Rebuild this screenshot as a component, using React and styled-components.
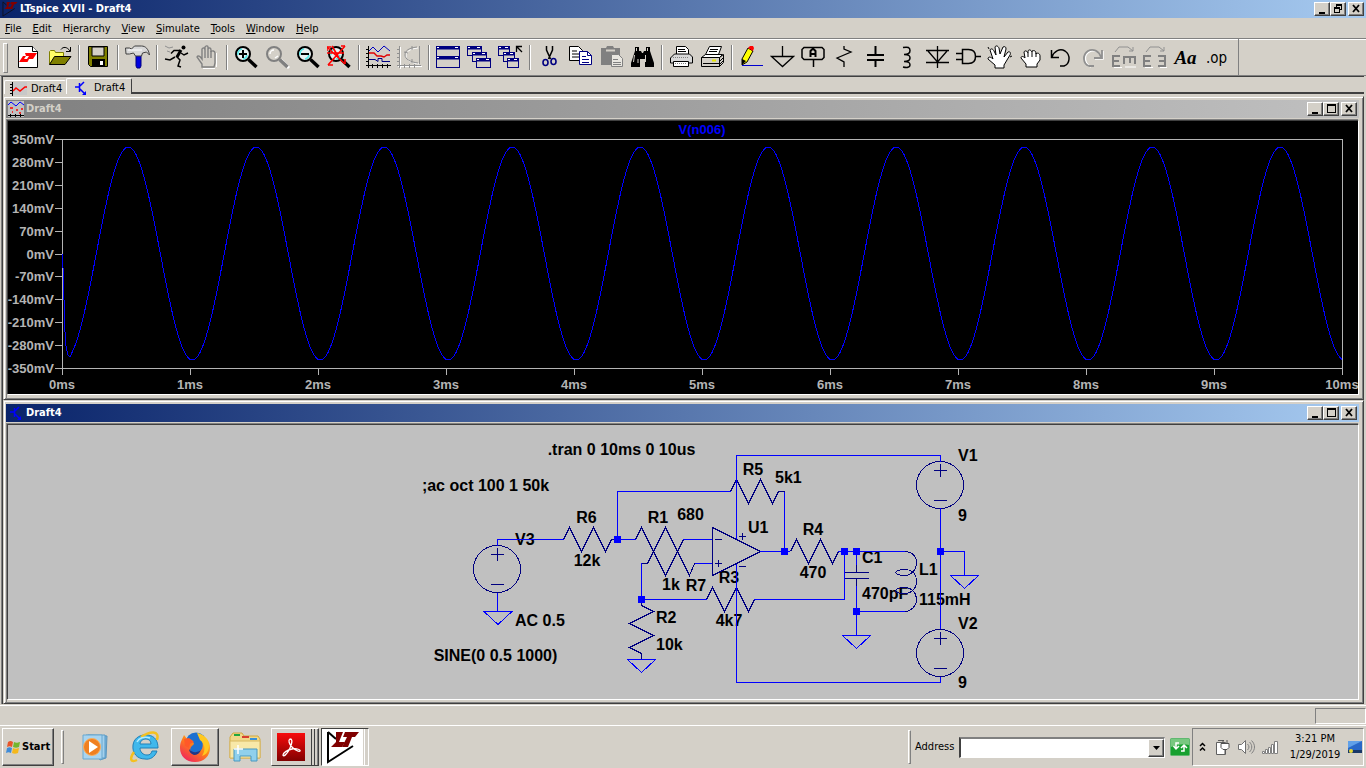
import React from "react";
import styled, { createGlobalStyle, css } from "styled-components";

const GlobalStyle = createGlobalStyle`
  * {
    box-sizing: border-box;
  }

  body {
    margin: 0;
    background: #d4d0c8;
    font-family: "DejaVu Sans Condensed", "DejaVu Sans", sans-serif;
    font-size: 11px;
    line-height: 14px;
    color: #000;
  }

  button, input, select {
    font: inherit;
    color: inherit;
    border-radius: 0;
  }

  svg {
    display: block;
    flex: none;
  }
`;

const raised = css`
  border: 1px solid;
  border-color: #fff #404040 #404040 #fff;
  box-shadow: inset -1px -1px 0 #808080;
`;

/* ---------- toolbar icons, all on a 25 x 25 canvas ---------- */

const Lens = ({ stroke = "#000", glass = "#e8f0f0" }) => (
  <>
    <circle cx="9" cy="9" r="7" fill={glass} stroke={stroke} strokeWidth="2" />
    <path d="M14.5 14.5L22.5 22" stroke={stroke} strokeWidth="3.4" />
    <path d="M4 10a5 5 0 0 1 4-6M13 10a5 5 0 0 1-4 4" stroke="#55e8e8" strokeWidth="1.6" />
  </>
);

const MiniWindow = ({ x, y, w = 14, h = 9 }) => (
  <>
    <rect x={x + 0.5} y={y + 0.5} width={w} height={h} fill="#d4d0c8" stroke="#000080" />
    <path d={`M${x} ${y + 2}h${w + 1}`} stroke="#000080" strokeWidth="3" />
    <path d={`M${x + w - 4} ${y + 1.5}h3M${x + 1} ${y + 1.5}h2`} stroke="#fff" />
  </>
);

const icons = {
  newSchematic: (
    <>
      <path d="M2.5 1.5h14l5 5v16h-19z" fill="#fff" stroke="#000" />
      <path d="M16.5 1.5v5h5" fill="#fff" stroke="#000" />
      <path d="M9 8h12l-4 6h-4l-1.500 3H3l4-6h3zM10 11l-2 3h3l2-3z" fill="#f00" fillRule="evenodd" />
    </>
  ),
  open: (
    <>
      <path d="M2.500 19.500v-13l1-1h4l1 2h8v5" fill="#ffff66" stroke="#808000" />
      <path d="M2.500 19.500l5-8h16.500l-6 8z" fill="#808000" stroke="#000" />
      <path d="M14 4.500c2-3 6-3 9 1.500M23.500 2v4.500h-4.500" stroke="#000" />
    </>
  ),
  save: (
    <>
      <path d="M2.500 1.500h19v20h-17l-2-2z" fill="#808000" stroke="#000" />
      <path d="M6 2h12v9H6z" fill="#d4d0c8" stroke="#000" />
      <path d="M6 14h13v7H6z" fill="#000" />
      <path d="M14 16h3v4h-3z" fill="#fff" />
    </>
  ),
  hammer: (
    <>
      <path d="M11 10h5v11l-1 2h-3l-1-2z" fill="#0000e0" stroke="#000080" />
      <path d="M.5 3h4l2 1 3-3h7c4 0 7 3 8 9l-3-3-4 1-1 3h-6l-2-3-4 1H1z" fill="#d8d8d8" stroke="#404040" />
      <path d="M3 5h14" stroke="#fff" />
    </>
  ),
  run: (
    <>
      <circle cx="19.500" cy="2.500" r="2" fill="#000" />
      <path d="M17 5l-4 7" stroke="#000" strokeWidth="3" />
      <path d="M16 5.500h-6l-3 3M17 8l3 2 4-2M12 11l4 4-2 6 3 1M11 12l-5 3-5-1" stroke="#000" strokeWidth="1.500" />
      <path d="M1 1l4 2 4-1M3 6l3 1" stroke="#909090" />
    </>
  ),
  halt: (
    <>
      <path d="M7 22v-3l-5-7c1-2 3-1 5 2V4c1-2 3-1 3 1V2c1-2 3-1 3 0v2c1-2 3-1 3 1v2c1-2 4-1 4 1v10l-1 4z" fill="#d4d0c8" stroke="#808080" strokeWidth="1.400" />
      <path d="M10 5v8M13 4v9M16 6v7" stroke="#808080" strokeWidth="1.400" />
      <path d="M8 23.500h12M21.500 8v14" stroke="#fff" />
    </>
  ),
  zoomIn: (
    <>
      <Lens />
      <path d="M5 9h8M9 5v8" stroke="#000" strokeWidth="2" />
    </>
  ),
  pan: (
    <>
      <path d="M16 15l8 8" stroke="#fff" strokeWidth="3" />
      <circle cx="9" cy="9" r="7" fill="#d4d0c8" stroke="#808080" strokeWidth="2" />
      <path d="M14.500 14.500l8 7.500" stroke="#808080" strokeWidth="3.400" />
      <path d="M5 9a4 4 0 0 1 4-4M13 11l-3 2" stroke="#fff" strokeWidth="1.500" />
    </>
  ),
  zoomOut: (
    <>
      <Lens />
      <path d="M5 9h8" stroke="#000" strokeWidth="2" />
    </>
  ),
  zoomFit: (
    <>
      <Lens />
      <path d="M0 2l18 17M18 1L1 20M5 1l7 12M0 8h17" stroke="#f00" strokeWidth="1.600" />
      <path d="M0 2h4M0 2v4M18 1h-4M1 20h5M18 19v-5" stroke="#f00" strokeWidth="1.600" />
    </>
  ),
  autorange: (
    <>
      <path d="M2.500 1v22M0 20.500h25M0 4.500h3M0 8.500h3M0 12.500h3M0 16.500h3M6.500 19v4M11.500 19v4M16.500 19v4M21.500 19v4" stroke="#000" />
      <path d="M3 6l4-4 5 5 6-6 6 5" stroke="#0000c0" />
      <path d="M3 8h5l3 3h4l3 1 3-2h3" stroke="#e00000" strokeWidth="1.400" />
      <path d="M3 14.500h6l3 2v-3h4v3h8" stroke="#000080" />
    </>
  ),
  xyplot: (
    <>
      <g stroke="#fff" transform="translate(1 1)">
        <path d="M2.500 1v22M0 20.500h24M20 2c-9 1-12 4-12 8s5 7 13 8" />
      </g>
      <path d="M2.500 1v22M0 20.500h24M0 4.500h3M0 8.500h3M0 12.500h3M0 16.500h3M7.500 19v4M12.500 19v4M17.500 19v4M22.500 1v18" stroke="#909090" />
      <path d="M20 2c-9 1-12 4-12 8s5 7 13 8M7 7l4 1M15 1v4M15 14v4" stroke="#909090" />
    </>
  ),
  tile: (
    <>
      <MiniWindow x={0} y={1} w={23} h={10} />
      <MiniWindow x={0} y={11} w={23} h={11} />
    </>
  ),
  cascade: (
    <>
      <MiniWindow x={0} y={1} />
      <MiniWindow x={5} y={7} />
      <MiniWindow x={9} y={13} />
    </>
  ),
  closeAll: (
    <>
      <MiniWindow x={0} y={1} w={11} />
      <MiniWindow x={5} y={7} w={11} />
      <MiniWindow x={9} y={13} w={11} />
      <path d="M18.500 7V1.500H24M19 2l5 5" stroke="#000" strokeWidth="1.300" />
    </>
  ),
  cut: (
    <>
      <path d="M9.500 1v4l4 9M15.500 1v4l-4 9" stroke="#000" strokeWidth="1.500" />
      <ellipse cx="8.500" cy="17.500" rx="2.500" ry="3" stroke="#000080" strokeWidth="1.600" />
      <ellipse cx="16.500" cy="16.500" rx="2.500" ry="3" stroke="#000080" strokeWidth="1.600" />
    </>
  ),
  copy: (
    <>
      <path d="M1.500 1.500h9l4 4v10h-13z" fill="#fff" stroke="#000" />
      <path d="M4 6h5M4 9h7M4 12h7" stroke="#000" />
      <path d="M11.500 6.500h8l4 4v9h-12z" fill="#fff" stroke="#000080" />
      <path d="M19.500 6.500v4h4M14 11.500h4M14 14.500h7M14 17.500h7" stroke="#000080" />
    </>
  ),
  paste: (
    <>
      <path d="M2 3h5l1-2h6l1 2h6v17H2z" fill="#808080" />
      <path d="M7 5.500h9" stroke="#d4d0c8" strokeWidth="2" />
      <path d="M12.500 9.500h7l4 4v8h-11z" fill="#e8e6e0" stroke="#808080" />
      <path d="M14 14.500h5M14 17.500h8M14 19.500h8" stroke="#808080" />
    </>
  ),
  find: (
    <>
      <path d="M5 2h4v4h2l1 2h1l1-2h2V2h4v4l4 12v4h-9v-8h-5v8H1v-4l4-12z" fill="#000" />
      <path d="M6.500 3v3M17.500 3v3M4.500 10l-1 7M15.500 10v7M8 14v4" stroke="#d4d0c8" />
    </>
  ),
  printSetup: (
    <>
      <path d="M7.500 9.500v-8h9l3 3v5" fill="#fff" stroke="#000" />
      <path d="M1.500 18v-5l4-4h15l3 3v6z" fill="#d8d8d8" stroke="#000" />
      <path d="M4.500 21.500v-5h15v5zM9 4.500h7M9 6.500h8" fill="#fff" stroke="#000" />
      <path d="M4 12.500h16M6 18.500h12" stroke="#808080" strokeDasharray="1 1" />
    </>
  ),
  print: (
    <>
      <path d="M5.500 9.500l4-8h12l-3 8z" fill="#fff" stroke="#000" />
      <path d="M10 4.500h8M9 6.500h8" stroke="#000" />
      <path d="M1.500 12.500l4-3h17l-3 3z" fill="#fff" stroke="#000" />
      <path d="M1.500 12.500h18v9h-18zM19.500 12.500l4-3v8l-4 4z" fill="#d4d0c8" stroke="#000" />
      <path d="M3 18.500h16M20 16l3-3M20 19l3-3" stroke="#000" />
      <path d="M12 15.500h4" stroke="#e8e800" strokeWidth="2" />
    </>
  ),
  wire: (
    <>
      <path d="M3 14L9 3l5 3-6 11-5 3z" fill="#ff0" stroke="#000" />
      <path d="M9 3l2-2h3l1 2-1 3z" fill="#f00" />
      <path d="M3 14l4 2-4 4z" fill="#000" />
      <path d="M3 20.500h21" stroke="#0000d0" />
    </>
  ),
  ground: <path d="M12.500 1v10M1.500 11.500h22l-11 10z" stroke="#000" strokeWidth="1.300" />,
  label: (
    <>
      <path d="M3 2.500h18l2 2v8l-2 2H3l-2-2v-8zM12.500 15v7" stroke="#000" strokeWidth="1.500" />
      <path d="M9.500 12V6l2-2h1l2 2v6M9 9h6" stroke="#000" strokeWidth="2" />
    </>
  ),
  resistor: <path d="M12 1v3l7 3-14 6 7 4v5" stroke="#000" strokeWidth="1.300" />,
  capacitor: <path d="M12.500 1v8M4 10h17M4 15h17M12.500 15v7" stroke="#000" strokeWidth="2" />,
  inductor: <path d="M9 2.500c5-1 7 0 7 3s-3 4-6 4c5 0 6 1 6 3.500s-3 3.500-6 3.500c5 0 6 1 6 3.500s-3 3-7 2" stroke="#000" strokeWidth="1.500" />,
  diode: <path d="M12.500 1v22M1 5.500h23M1 17.500h23M3 6l9.500 11L22 6" stroke="#000" strokeWidth="1.300" />,
  component: (
    <path d="M6.500 4.500h6c5 0 7 3 7 7s-2 7-7 7h-6zM0 8.500h6M0 14.500h6M20 11.500h5" fill="#d4d0c8" stroke="#000" strokeWidth="1.500" />
  ),
  move: (
    <>
      <path d="M8 23v-3L1 14c0-3 3-2 5 0L3 5c1-2 3-1 4 1l2 4-1-8c1-2 3-1 4 1l1 6 3-7c2-1 3 0 3 2l-2 8 4-5c2-1 3 1 2 3l-6 10v3z" fill="#fff" stroke="#000" />
      <path d="M2 4l-1-2M23 12l2-1" stroke="#000" />
    </>
  ),
  drag: (
    <>
      <path d="M8 22v-3l-5-6c0-2 2-2 4 0l-1-6c1-2 3-1 4 1V6c1-2 3-1 4 1V6c2-1 4 0 4 2v1c2-2 4 0 4 2v4l-3 4v3z" fill="#fff" stroke="#000" />
      <path d="M10 8v4M14 7v5M18 8v4" stroke="#000" />
    </>
  ),
  undo: <path d="M2.500 5v7.500H10M3 12c2-6 8-9 13-6 6 4 5 13-1 15h-4" stroke="#000" strokeWidth="1.500" />,
  redo: (
    <>
      <path d="M23 6v8h-8M22 13c-2-6-8-9-13-6-6 4-4 12 2 15" stroke="#fff" strokeWidth="1.500" />
      <path d="M22 5v8h-8M21 12C19 6 13 3 8 6c-6 4-5 13 1 15h5" stroke="#909090" strokeWidth="1.800" />
    </>
  ),
  rotate: (
    <>
      <path d="M3 22.500h8M14 22h11" stroke="#fff" />
      <path d="M9 11H2v10h7M2 16h6M13 19v-8M13 12h12M19 12v6M24 12v7" stroke="#808080" strokeWidth="2" />
      <path d="M4 7l4-5h9l5 4M22 2v4h-4" stroke="#909090" />
    </>
  ),
  mirror: (
    <>
      <path d="M3 22.500h8M18 22.500h7" stroke="#fff" />
      <path d="M9 11H2v10h7M2 16h6M16 11h7v10h-7M23 16h-6" stroke="#808080" strokeWidth="2" />
      <path d="M4 7l4-5h9l5 4M22 2v4h-4" stroke="#909090" />
    </>
  ),
};

const toolGroups = [
  ["newSchematic", "open"],
  ["save"],
  ["hammer"],
  ["run", "halt"],
  ["zoomIn", "pan", "zoomOut", "zoomFit"],
  ["autorange", "xyplot"],
  ["tile", "cascade", "closeAll"],
  ["cut", "copy", "paste", "find"],
  ["printSetup", "print"],
  [
    "wire", "ground", "label", "resistor", "capacitor", "inductor", "diode",
    "component", "move", "drag", "undo", "redo", "rotate", "mirror",
  ],
];

const menus = [
  ["", "F", "ile"],
  ["", "E", "dit"],
  ["H", "i", "erarchy"],
  ["", "V", "iew"],
  ["", "S", "imulate"],
  ["", "T", "ools"],
  ["", "W", "indow"],
  ["", "H", "elp"],
];

const LogoIcon = ({ size, edge = "#000" }) => (
  <svg width={size} height={size} viewBox="0 0 34 34" fill="none">
    <path d="M2 2v30l25-16" stroke={edge} strokeWidth="2" />
    <path d="M2 2l8 7" stroke={edge} strokeWidth="2" />
    <path d="M10 2h7l-4 10h6l-3 5H5l5-5z" fill="#800000" />
    <path d="M19 2h14l-4 5h-3l-4 10h-6l5-10h-4z" fill="#800000" />
  </svg>
);

const TransistorIcon = () => (
  <svg width="16" height="16" viewBox="0 0 16 16" fill="none">
    <path d="M2 7h4M6.500 3v9M7 6l4-4M7 9l5 5" stroke="#00f" strokeWidth="1.500" />
    <path d="M13 15H9l4-4z" fill="#00f" />
  </svg>
);

const TraceIcon = () => (
  <svg width="18" height="14" viewBox="0 0 18 14" fill="none">
    <path d="M2 0h16v13H2z" fill="#c8c8c8" />
    <path d="M3.500 0v14M1 2.500h2M1 5.500h2M1 8.500h2M1 11.500h2" stroke="#000" />
    <path d="M4 9l3-3 4 3 5-4h2" stroke="#f00" strokeWidth="1.500" />
  </svg>
);

const PlotIcon = () => (
  <svg width="16" height="16" viewBox="0 0 16 16" fill="none">
    <path d="M0 0h16v16H0z" fill="#c0c0c0" />
    <path d="M0 4l3-3 5 4 4-4 4 3" stroke="#00f" />
    <path d="M2 7h3M8 9h2M13 8h2M4 11h1M11 12h2" stroke="#f00" strokeWidth="1.500" />
    <path d="M0 14.500h16M2.500 13v3M7.500 13v3M12.500 13v3" stroke="#000" />
  </svg>
);

const glyphs = {
  minimize: <path d="M3 9h6v2H3z" fill="#000" />,
  maximize: <path d="M2 1h9v9H2zM3 3v6h7V3z" fill="#000" fillRule="evenodd" />,
  restore: <path d="M4 1h6v6H8v3H2V4h2zM5 3v1h3v2h1V3zM3 6v3h4V6z" fill="#000" fillRule="evenodd" />,
  close: <path d="M3 2l6 7M9 2L3 9" stroke="#000" strokeWidth="1.800" />,
};

const WindowButtons = ({ middle = "maximize" }) => (
  <Buttons>
    {["minimize", middle, "close"].map((kind) => (
      <CaptionButton key={kind} aria-label={kind} $apart={kind === "close"}>
        <svg width="12" height="12" viewBox="0 0 12 12">{glyphs[kind]}</svg>
      </CaptionButton>
    ))}
  </Buttons>
);

/* ---------- waveform ---------- */

const LEFT = 62;
const TOP = 139.5;
const PLOT_H = 229;

const tracePoints = () => {
  const points = ["62.5,254", "63,268", "64,300", "65,332", "66,346", "68,355", "70,357"];
  for (let x = 72; x <= 1342; x += 2) {
    const y = 253.5 - 106.5 * Math.sin((2 * Math.PI * (x - 96.3)) / 128);
    points.push(`${x},${y.toFixed(1)}`);
  }
  return points.join(" ");
};

const volts = [350, 280, 210, 140, 70, 0, -70, -140, -210, -280, -350];

const Waveform = () => (
  <Canvas viewBox="8 121 1350 273" $background="#000">
    <g stroke="#b4b4b4" fill="none" shapeRendering="crispEdges">
      <rect x="62.500" y="139.500" width="1280" height="229" />
      {volts.map((v, i) => (
        <path key={v} d={`M55 ${TOP + Math.round((i * PLOT_H) / 10)}h7`} />
      ))}
      {volts.map((v, i) => (
        <path key={v} d={`M${LEFT + 0.5 + i * 128} 368v7`} />
      ))}
    </g>
    <polyline points={tracePoints()} fill="none" stroke="#00f" shapeRendering="crispEdges" />
    <AxisText x="702" y="134" textAnchor="middle" fill="#00f">V(n006)</AxisText>
    {volts.map((v, i) => (
      <AxisText key={v} x="54" y={144 + Math.round((i * PLOT_H) / 10)} textAnchor="end">
        {v}mV
      </AxisText>
    ))}
    {volts.map((v, i) => (
      <AxisText key={v} x={LEFT + i * 128} y="389" textAnchor="middle">
        {i}ms
      </AxisText>
    ))}
  </Canvas>
);

/* ---------- schematic ---------- */

const Source = ({ y }) => (
  <>
    <circle cx="0" cy={y} r="23.500" />
    <path d={`M-6 ${y - 14.5}h13M0.500 ${y - 21}v13M-6 ${y + 15.5}h13`} />
  </>
);

const Ground = ({ x, y }) => <path d={`M${x - 14} ${y}h28l-14 13z`} stroke="#00f" />;

const labels = [
  [621.5, 455, ".tran 0 10ms 0 10us", "middle"],
  [485.5, 491, ";ac oct 100 1 50k", "middle"],
  [586.5, 523, "R6", "middle"],
  [587, 566, "12k", "middle"],
  [515, 545, "V3"],
  [515, 626, "AC 0.5"],
  [495.5, 661, "SINE(0 0.5 1000)", "middle"],
  [658, 523, "R1", "middle"],
  [690.5, 520, "680", "middle"],
  [671, 590, "1k", "middle"],
  [696, 591, "R7", "middle"],
  [656, 623, "R2"],
  [656, 650, "10k"],
  [729, 583, "R3", "middle"],
  [729, 626, "4k7", "middle"],
  [753, 475, "R5", "middle"],
  [775, 483, "5k1"],
  [748, 533, "U1"],
  [813, 535, "R4", "middle"],
  [813, 578, "470", "middle"],
  [862, 563, "C1"],
  [862, 599, "470pF"],
  [919, 575, "L1"],
  [919, 605, "115mH"],
  [958, 461, "V1"],
  [958, 521, "9"],
  [958, 629, "V2"],
  [958, 688, "9"],
];

const nodes = [
  [617, 539], [641, 599], [784, 551], [844, 551], [856, 551], [856, 611], [940, 551],
];

const Schematic = () => (
  <Canvas viewBox="8 425 1350 274" $background="#c0c0c0">
    {labels.map(([x, y, text, anchor]) => (
      <PartText key={`${x}-${y}`} x={x} y={y} textAnchor={anchor || "start"}>
        {text}
      </PartText>
    ))}
    <g fill="none" stroke="#000080" shapeRendering="crispEdges">
      <g transform="translate(497 0)"><Source y={569} /></g>
      <g transform="translate(940 0)"><Source y={485} /></g>
      <g transform="translate(940 0)"><Source y={653} /></g>
      <path d="M563.500 539.500l6-12 12 24 12-24 12 24 6-12h6" />
      <path d="M635.500 539.500l6-12 24 48 18-36h6" />
      <path d="M641.500 563.500h6l18-36 24 48 5-12h6" />
      <path d="M641.500 603v2.500l12 6-24 12 24 12-24 12 12 6v5" />
      <path d="M706.500 599.500l6-12 12 24 12-24 12 24 6-12h6" />
      <path d="M730.500 491.500l6-12 12 24 12-24 12 24 6-12h6" />
      <path d="M790.500 551.500l6-12 12 24 12-24 12 24 6-12h6" />
      <path d="M712.500 527.500v48l48-24z" />
      <path d="M715 539.500h7M715 563.500h7M718.500 560v7M739 536.500h7M742.500 533v7M739 566.500h7" />
      <path d="M844 572.500h25M844 578.500h25M856.500 560v12M856.500 579v12" />
      <path d="M904.500 551.500c8 0 12 5 12 11.500s-5 12.500-12 12.500c-6 0-9-2-9-3s4-3 9-3c8 0 12 5 12 12s-5 12-12 12c-6 0-9-1.500-9-3s4-3 9-3c8 0 12 6 12 12s-5 12-12 12" />
    </g>
    <g fill="none" stroke="#00f" shapeRendering="crispEdges">
      <path d="M497.500 546v-6.500h66M497.500 593v18M617.500 539.500v-48h113M617.500 539.500h18" />
      <path d="M683 539.500h29M695 563.500h17M641.500 563v36M641.500 599.500h65M754 599.500h90.500v-48" />
      <path d="M736.500 539v-83.500h204v6M736.500 564v118.500h204v-6" />
      <path d="M784.500 491.500v60M760 551.500h30M838 551.500h67M856.500 551v14M856.500 586v50M856.500 611.500h48" />
      <path d="M940.500 508v121M940.500 551.500h24v24" />
      <Ground x={498} y={611.5} />
      <Ground x={641.5} y={659.5} />
      <Ground x={856.5} y={635.5} />
      <Ground x={964.5} y={575.5} />
    </g>
    {nodes.map(([x, y]) => (
      <rect key={`${x}-${y}`} x={x - 3} y={y - 3} width="7" height="7" fill="#00f" />
    ))}
  </Canvas>
);

/* ---------- taskbar drawings ---------- */

const WindowsFlag = () => (
  <svg width="16" height="16" viewBox="0 0 16 16">
    <path d="M3 3c2-1.500 3-1.500 5 0L7 8C5 7 4 7 2 8z" fill="#e8552a" />
    <path d="M9 3c2 1 3 1 6 0l-1 5c-2 1-4 1-6 0z" fill="#74b62e" />
    <path d="M2 9c2-1 3-1 5 0l-1 5c-2-1-3-1-5 0z" fill="#3f8bd8" />
    <path d="M8 9c2 1 3 1 6 0l-1 5c-2 1-4 1-6 0z" fill="#f5b81c" />
  </svg>
);

const MediaPlayerIcon = () => (
  <svg width="32" height="32" viewBox="0 0 32 32">
    <path d="M9 4l19 1-1 22-6 2z" fill="#78b4dc" stroke="#5a94bc" />
    <path d="M7 4h19v23H7z" fill="#a4d0ec" stroke="#5a9cc8" />
    <path d="M4 4h19v24H4z" fill="#a8d4f0" stroke="#68a8d0" />
    <circle cx="13" cy="16" r="8.500" fill="#f08020" stroke="#f8b060" />
    <path d="M10 10l9 6-9 6z" fill="#fff" />
  </svg>
);

const ExplorerIcon = () => (
  <svg width="32" height="32" viewBox="0 0 32 32" fill="none">
    <path d="M28 20c-2 6-7 9-12 8C8 28 3 22 4 14S13 3 19 4c7 1 10 6 10 13H11c0 4 3 7 7 7 3 0 4-1 5-4zM11 13h11c0-3-2-5-5-5s-6 2-6 5z" fill="#40b8ec" stroke="#2080b8" fillRule="evenodd" />
    <path d="M5 21c-5 7-3 11 3 8M12 6c9-6 19-7 16 3" stroke="#f4c020" strokeWidth="2.500" />
    <path d="M8 11c2-4 7-6 13-4" stroke="#b0ecff" strokeWidth="1.500" />
  </svg>
);

const FirefoxIcon = () => (
  <svg width="32" height="32" viewBox="0 0 32 32">
    <defs>
      <linearGradient id="fox" x1="0.900" y1="0" x2="0.200" y2="1">
        <stop offset="0" stopColor="#ffe030" />
        <stop offset="0.500" stopColor="#ff8018" />
        <stop offset="1" stopColor="#f02060" />
      </linearGradient>
    </defs>
    <circle cx="17" cy="12" r="10.500" fill="#1c70d0" />
    <path d="M5 4l3 4 5 1 2 4-3 3-1 3c3 4 9 3 12-1 2-5 0-10-4-16 8 3 12 8 12 15 0 8-6 14-15 14S1 25 1 17c0-6 2-8 4-13z" fill="url(#fox)" />
    <path d="M5 8l5-1 5 4-4 2-1 4-4-2z" fill="#ff5828" />
    <path d="M18 2c8 2 12 7 12 14-1 6-4 8-7 9 4-6 3-12-2-16z" fill="#ffc820" />
    <path d="M10 18c3 4 8 4 12 1-1 3-4 5-7 5-3-1-5-3-5-6z" fill="#203888" />
  </svg>
);

const FolderIcon = () => (
  <svg width="32" height="32" viewBox="0 0 32 32">
    <path d="M1 6l3-4h9l2 3h14l2 3v19H1z" fill="#f0d888" stroke="#d0a840" />
    <path d="M5 3h6v2H5z" fill="#20a840" />
    <path d="M13 5h7v2h-7z" fill="#d84030" />
    <path d="M21 7h7v2h-7z" fill="#3890d8" />
    <path d="M1 10h30v17H1z" fill="#f8e8a8" stroke="#d8b860" />
    <path d="M5 30V18h23v12h-6v-5H11v5z" fill="#90d0ec" stroke="#4898c0" />
    <path d="M9 14v9M5 18h9" stroke="#fff" strokeWidth="1.500" />
  </svg>
);

const AcrobatIcon = () => (
  <svg width="28" height="28" viewBox="0 0 28 28" fill="none">
    <defs>
      <linearGradient id="acro" x1="0" y1="0" x2="0" y2="1">
        <stop offset="0" stopColor="#f80c0c" />
        <stop offset="1" stopColor="#800000" />
      </linearGradient>
    </defs>
    <path d="M0 0h28v28H0z" fill="url(#acro)" />
    <path d="M13 6c-2 1-1 5 2 8s7 5 8 4-3-3-8-2-9 4-9 6 4 0 7-7 2-9 0-9z" stroke="#fff" strokeWidth="1.300" />
  </svg>
);

const GoIcon = () => (
  <svg width="20" height="18" viewBox="0 0 20 18" fill="none">
    <rect x="0.500" y="0.500" width="19" height="17" rx="1" fill="#18a030" stroke="#60b870" />
    <path d="M1 1h18v6C12 5 7 7 1 9z" fill="#78c880" />
    <path d="M6 11V5h3M3.500 8L6 11l3-3M14 7v6h-3M11 10l3-3 3 3" stroke="#fff" strokeWidth="1.500" />
  </svg>
);

const PowerIcon = () => (
  <svg width="16" height="18" viewBox="0 0 16 18" fill="none">
    <path d="M4 2.500h6M2.500 4.500v12h9v-12z" stroke="#606060" fill="#fff" />
    <path d="M7 5.500h8v4l-2 2H9l-2-2zM9 2v4M13 2v4M11 11v5" stroke="#505050" fill="#fff" />
  </svg>
);

const SpeakerIcon = () => (
  <svg width="18" height="18" viewBox="0 0 18 18" fill="none">
    <path d="M1.500 6.500h3l4-4v13l-4-4h-3z" fill="#fff" stroke="#707070" />
    <path d="M10.500 6c2 2 2 4 0 6M12.500 4c3 3 3 7 0 10M14.500 2.500c4 4 4 9 0 13" stroke="#808080" />
  </svg>
);

const SignalIcon = () => (
  <svg width="17" height="16" viewBox="0 0 17 16" fill="#fff" stroke="#808080">
    <path d="M.5 12.500h2v2h-2zM3.500 10.500h2v4h-2zM6.500 8.500h2v6h-2zM9.500 5.500h2v9h-2zM12.500 2.500h3v12h-3z" />
  </svg>
);

const DisplayIcon = () => (
  <svg width="16" height="16" viewBox="0 0 16 16">
    <path d="M1 2h14v9H1z" fill="#2868c8" />
    <path d="M1 2h14L1 9z" fill="#60a0e8" />
    <path d="M1 11h14v3H1z" fill="#183868" />
    <circle cx="4" cy="12" r="2" fill="#e8d838" />
  </svg>
);

const App = () => {
  return (
    <Shell>
      <GlobalStyle />
      <TitleBar $active>
        <LogoIcon size={16} edge="#101020" />
        <Caption>LTspice XVII - Draft4</Caption>
        <WindowButtons middle="restore" />
      </TitleBar>

      <MenuBar>
        {menus.map(([before, key, after]) => (
          <MenuItem key={key + after}>
            {before}
            <u>{key}</u>
            {after}
          </MenuItem>
        ))}
      </MenuBar>

      <ToolRow>
        <Toolbar>
          {toolGroups.map((group) => (
            <ToolGroup key={group[0]}>
              {group.map((name) => (
                <ToolButton key={name} aria-label={name}>
                  <svg width="25" height="25" viewBox="0 0 25 25" fill="none">
                    {icons[name]}
                  </svg>
                </ToolButton>
              ))}
            </ToolGroup>
          ))}
          <ToolButton $face="serif">Aa</ToolButton>
          <ToolButton $face="sans">.op</ToolButton>
        </Toolbar>
      </ToolRow>

      <Workspace>
        <Tabs>
          <Tab $width={62}>
            <TraceIcon />
            Draft4
          </Tab>
          <Tab $width={66} $selected>
            <TransistorIcon />
            Draft4
          </Tab>
          <TabRest />
        </Tabs>

        <Pane>
          <TitleBar>
            <PlotIcon />
            <Caption>Draft4</Caption>
            <WindowButtons />
          </TitleBar>
          <PaneBody $bottom={5}>
            <Waveform />
          </PaneBody>
        </Pane>

        <Pane>
          <TitleBar $active>
            <TransistorIcon />
            <Caption>Draft4</Caption>
            <WindowButtons />
          </TitleBar>
          <PaneBody $bottom={4}>
            <Schematic />
          </PaneBody>
        </Pane>
      </Workspace>

      <StatusBar>
        <StatusCell />
      </StatusBar>

      <Taskbar>
        <StartButton>
          <WindowsFlag />
          Start
        </StartButton>
        <Grip />
        <TaskButtons>
          <TaskButton aria-label="Media Player"><MediaPlayerIcon /></TaskButton>
          <TaskButton aria-label="Internet Explorer"><ExplorerIcon /></TaskButton>
          <TaskButton aria-label="Firefox" $look="open"><FirefoxIcon /></TaskButton>
          <TaskButton aria-label="Explorer"><FolderIcon /></TaskButton>
          <TaskButton aria-label="Acrobat" $look="stack"><AcrobatIcon /></TaskButton>
          <TaskButton aria-label="LTspice" $look="pressed"><LogoIcon size={34} /></TaskButton>
        </TaskButtons>
        <Grip />
        <AddressLabel htmlFor="address">Address</AddressLabel>
        <AddressBox>
          <AddressInput id="address" />
          <DropButton aria-label="Show addresses">
            <svg width="7" height="4" viewBox="0 0 7 4"><path d="M0 0h7L3.500 4z" /></svg>
          </DropButton>
        </AddressBox>
        <GoButton aria-label="Refresh"><GoIcon /></GoButton>
        <Tray>
          <svg width="7" height="10" viewBox="0 0 7 10" fill="none">
            <path d="M1 4l2.500-2.500L6 4M1 8.500L3.500 6 6 8.500" stroke="#000" strokeWidth="1.500" />
          </svg>
          <TrayIcons>
            <PowerIcon />
            <SpeakerIcon />
            <SignalIcon />
          </TrayIcons>
          <Clock>
            <span>3:21 PM</span>
            <span>1/29/2019</span>
          </Clock>
          <DisplayIcon />
        </Tray>
      </Taskbar>
    </Shell>
  );
};

const Shell = styled.div`
  min-height: 100vh;
  display: flex;
  flex-direction: column;
  overflow: hidden;
`;

const TitleBar = styled.header`
  display: flex;
  align-items: center;
  height: 18px;
  padding: 0 2px;
  color: ${(p) => (p.$active ? "#fff" : "#d4d0c8")};
  background: ${(p) =>
    p.$active
      ? "linear-gradient(to right, #0a246a, #a6caf0)"
      : "linear-gradient(to right, #808080, #c0c0c0)"};
`;

const Caption = styled.h1`
  margin: 0;
  padding-left: 2px;
  flex: 1;
  font-size: 11px;
  font-weight: bold;
`;

const Buttons = styled.div`
  display: flex;
`;

const CaptionButton = styled.button`
  ${raised}
  display: flex;
  align-items: center;
  justify-content: center;
  width: 16px;
  height: 14px;
  padding: 0;
  margin-left: ${(p) => (p.$apart ? 2 : 0)}px;
  background: #d4d0c8;
`;

const MenuBar = styled.nav`
  display: flex;
  align-items: center;
  gap: 11px;
  height: 20px;
  padding: 2px 0 0 5px;
`;

const MenuItem = styled.button`
  border: 0;
  padding: 0;
  background: none;
  line-height: 16px;
`;

const ToolRow = styled.div`
  display: flex;
  border-top: 1px solid #808080;
  border-bottom: 1px solid #808080;
  box-shadow: inset 0 1px 0 #fff;
`;

const Toolbar = styled.div`
  display: flex;
  align-items: center;
  height: 36px;
  padding: 1px 6px 0 3px;
  border-right: 1px solid #808080;

  &::before {
    content: "";
    width: 3px;
    height: 28px;
    margin-right: 5px;
    border: 1px solid;
    border-color: #fff #808080 #808080 #fff;
  }
`;

const ToolGroup = styled.div`
  display: flex;

  & + & {
    padding-left: 4px;
    margin-left: 3px;
    border-left: 1px solid #808080;
    box-shadow: inset 1px 0 0 #fff;
  }
`;

const ToolButton = styled.button`
  display: flex;
  align-items: center;
  justify-content: center;
  width: 31px;
  height: 25px;
  padding: 0;
  border: 0;
  background: none;
  ${(p) =>
    p.$face === "serif" &&
    css`
      font: italic bold 19px "Liberation Serif", serif;
    `}
  ${(p) =>
    p.$face === "sans" &&
    css`
      font: 15px "DejaVu Sans Condensed", sans-serif;
    `}
`;

const Workspace = styled.main`
  margin: 0 2px 0 1px;
  border-left: 1px solid #808080;
  border-top: 1px solid #404040;
  box-shadow: inset 1px 0 0 #404040;
  padding-left: 1px;
`;

const Tabs = styled.div`
  display: flex;
  align-items: flex-end;
  height: 17px;
  margin-bottom: 2px;
  padding-left: 1px;
`;

const Tab = styled.button`
  display: flex;
  align-items: center;
  gap: ${(p) => (p.$selected ? 5 : 4)}px;
  width: ${(p) => p.$width}px;
  height: ${(p) => (p.$selected ? 16 : 14)}px;
  padding: 3px 0 0 ${(p) => (p.$selected ? 6 : 4)}px;
  border: 1px solid #fff;
  border-bottom: 0;
  border-right-color: ${(p) => (p.$selected ? "#404040" : "#d4d0c8")};
  border-radius: 2px 2px 0 0;
  background: #d4d0c8;
  white-space: nowrap;
`;

const TabRest = styled.div`
  flex: 1;
  border-bottom: 2px solid #404040;
`;

const Pane = styled.section`
  padding: 2px 2px 0 2px;
  border: 1px solid #d4d0c8;
  border-right-color: #404040;
  border-bottom-color: #404040;
  box-shadow: inset 1px 1px 0 #fff, inset -1px -1px 0 #808080;

  & > header {
    margin: 1px 2px 0 0;
  }
`;

const PaneBody = styled.div`
  margin-top: 1px;
  padding-bottom: ${(p) => p.$bottom}px;
  border-left: 1px solid #808080;
  border-top: 1px solid #808080;
  margin-right: 3px;
`;

const Canvas = styled.svg`
  width: 100%;
  height: auto;
  background: ${(p) => p.$background};
  box-shadow: 1px 1px 0 #fff;
  border-top: 1px solid #404040;
  border-left: 1px solid #404040;
  box-sizing: border-box;
`;

const AxisText = styled.text`
  font: bold 13px "Liberation Sans", Arial, sans-serif;
  fill: ${(p) => p.fill || "#b4b4b4"};
`;

const PartText = styled.text`
  font: bold 16px "Liberation Sans", Arial, sans-serif;
`;

const StatusBar = styled.footer`
  display: flex;
  justify-content: flex-end;
  height: 20px;
  padding-top: 2px;
  margin-top: 1px;
  border-top: 1px solid #fff;
`;

const StatusCell = styled.div`
  width: 51px;
  height: 16px;
  border: 1px solid;
  border-color: #808080 #fff #fff #808080;
`;

const Taskbar = styled.div`
  display: flex;
  align-items: center;
  flex: 1;
  min-height: 43px;
  padding: 0 2px;
  border-top: 1px solid #fff;
`;

const StartButton = styled.button`
  ${raised}
  display: flex;
  align-items: center;
  gap: 1px;
  width: 52px;
  height: 38px;
  padding: 0 2px;
  background: #d4d0c8;
  font-weight: bold;
`;

const Grip = styled.div`
  width: 3px;
  height: 34px;
  margin: 0 4px 0 7px;
  border: 1px solid;
  border-color: #fff #808080 #808080 #fff;
`;

const TaskButtons = styled.div`
  display: flex;
  align-items: center;
  flex: 1;
  gap: 2px;
  padding-left: 3px;
`;

const TaskButton = styled.button`
  display: flex;
  align-items: center;
  justify-content: center;
  width: 48px;
  height: 38px;
  padding: 0;
  border: 0;
  background: none;
  ${(p) => p.$look === "open" && raised}
  ${(p) =>
    p.$look === "stack" &&
    css`
      ${raised}
      padding-right: 8px;
      box-shadow: inset -1px 0 0 #808080, inset -3px 0 0 #d4d0c8, inset -4px 0 0 #404040,
        inset -6px 0 0 #d4d0c8, inset -7px 0 0 #404040;
    `}
  ${(p) =>
    p.$look === "pressed" &&
    css`
      justify-content: flex-start;
      padding-left: 4px;
      border: 1px solid;
      border-color: #404040 #fff #fff #404040;
      background: #fff;
      box-shadow: inset -3px 0 0 #d4d0c8, inset -4px 0 0 #fff, inset -5px 0 0 #d4d0c8;
    `}
`;

const AddressLabel = styled.label`
  width: 44px;
`;

const AddressBox = styled.div`
  display: flex;
  width: 206px;
  height: 21px;
  border: 2px solid #404040;
  border-top-color: #808080;
  border-right-width: 1px;
  border-bottom-width: 1px;
  border-right-color: #fff;
  border-bottom-color: #fff;
  background: #fff;
`;

const AddressInput = styled.input`
  flex: 1;
  min-width: 0;
  padding: 0 2px;
  border: 0;
  background: #fff;
`;

const DropButton = styled.button`
  ${raised}
  display: flex;
  align-items: center;
  justify-content: center;
  width: 16px;
  padding: 0;
  background: #d4d0c8;
`;

const GoButton = styled.button`
  margin: 0 2px 0 5px;
  padding: 0;
  border: 0;
  background: none;
`;

const Tray = styled.div`
  display: flex;
  align-items: center;
  width: 172px;
  height: 38px;
  padding-left: 6px;
  border: 1px solid;
  border-color: #808080 #fff #fff #808080;
`;

const TrayIcons = styled.div`
  display: flex;
  align-items: center;
  gap: 7px;
  margin-left: 8px;
`;

const Clock = styled.time`
  display: flex;
  flex-direction: column;
  flex: 1;
  align-items: center;
  padding-left: 4px;
  line-height: 16px;
`;

export default App;
